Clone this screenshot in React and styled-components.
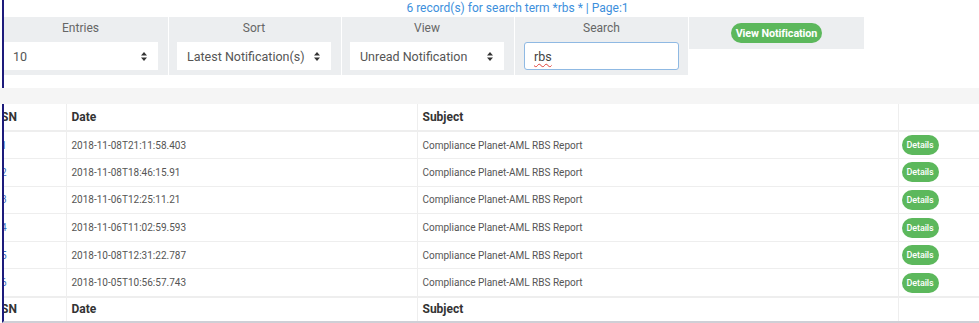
import React from "react";
import styled, { createGlobalStyle } from "styled-components";

const GlobalStyle = createGlobalStyle`
  body {
    margin: 0;
    background: #ffffff;
    font-family: Roboto, "Open Sans", "Liberation Sans", sans-serif;
    overflow: hidden;
  }
`;

const Page = styled.div`
  width: 979px;
  height: 323px;
  overflow: hidden;
  background: #fff;
`;

const Section = styled.section`
  margin-left: 2px;
  border-left: 2px solid #1d1b7c;
  overflow: hidden;
  background: #fff;
  ${(p) => p.bottomLine && "border-bottom: 2px solid #cfcfd6;"}
`;

const Title = styled.div`
  height: 17px;
  line-height: 17px;
  font-size: 12px;
  color: #3d8fdc;
  text-align: center;
  padding-left: 52px;
`;

const FilterRow = styled.div`
  display: flex;
  align-items: flex-start;
  gap: 1px;
  margin-left: -9px;
  margin-bottom: 13px;
`;

const FilterBox = styled.div`
  width: ${(p) => p.width || 172}px;
  height: ${(p) => (p.short ? 32 : 58)}px;
  box-sizing: border-box;
  background: #eceef0;
  padding: ${(p) => p.pad || "3px 10px 0 8px"};
  display: flex;
  flex-direction: column;
  align-items: stretch;
`;

const Label = styled.div`
  line-height: 16px;
  font-size: 12px;
  color: #666;
  text-align: center;
  margin-bottom: 6px;
`;

const Select = styled.div`
  height: 28px;
  background: #fff;
  display: flex;
  align-items: center;
  justify-content: space-between;
  padding: 0 11px 0 10px;
  font-size: 12.5px;
  color: #555;
`;

const SearchField = styled.div`
  height: 28px;
  box-sizing: border-box;
  background: #fff;
  border: 1px solid #8fb9e3;
  border-radius: 3px;
  display: flex;
  align-items: center;
  padding-left: 9px;
  font-size: 12.5px;
  color: #444;
`;

const SpellError = styled.span`
  text-decoration: underline wavy #e0413a;
  text-decoration-thickness: 1px;
  text-underline-offset: 2px;
`;

const GreenButton = styled.button`
  border: none;
  background: #5cb85c;
  color: #fff;
  font-family: inherit;
  font-size: ${(p) => (p.small ? 9 : 10.8)}px;
  font-weight: ${(p) => (p.small ? 500 : 700)};
  height: 20px;
  padding: 0 ${(p) => (p.small ? 5 : 5)}px;
  border-radius: 10px;
  letter-spacing: -0.1px;
  cursor: pointer;
`;

const ButtonHolder = styled.div`
  display: flex;
  justify-content: center;
  padding-top: 6px;
`;

const Strip = styled.div`
  height: 16px;
  background: #f5f5f5;
`;

const Table = styled.table`
  margin-left: -12px;
  width: 1010px;
  border-collapse: collapse;
  table-layout: fixed;
`;

const HeadCell = styled.th`
  text-align: left;
  font-size: 12px;
  font-weight: 700;
  color: #333;
  padding: 0 5px;
  border-left: 1px solid #eeeeee;
  &:first-child {
    border-left: none;
    padding-left: 9px;
  }
`;

const HeadRow = styled.tr`
  height: ${(p) => (p.foot ? 24 : 27)}px;
  border-${(p) => (p.foot ? "top" : "bottom")}: 2px solid #eeeeee;
`;

const BodyRow = styled.tr`
  height: 27.6px;
  border-bottom: 1px solid #eeeeee;
`;

const Cell = styled.td`
  font-size: 10px;
  color: #555;
  padding: 0 5px;
  border-left: 1px solid #eeeeee;
  &:first-child {
    border-left: none;
  }
`;

const SnCell = styled(Cell)`
  color: #3d6fc4;
  padding-left: 9px;
`;

const ActionCell = styled(Cell)`
  padding-left: 3px;
`;

function Arrows() {
  return (
    <svg width="6" height="9" viewBox="0 0 6 9">
      <path d="M3 0 L6 3.5 L0 3.5 Z M3 9 L6 5.5 L0 5.5 Z" fill="#333" />
    </svg>
  );
}

const rows = [
  "2018-11-08T21:11:58.403",
  "2018-11-08T18:46:15.91",
  "2018-11-06T12:25:11.21",
  "2018-11-06T11:02:59.593",
  "2018-10-08T12:31:22.787",
  "2018-10-05T10:56:57.743",
];

function HeaderCells() {
  return (
    <>
      <HeadCell>SN</HeadCell>
      <HeadCell>Date</HeadCell>
      <HeadCell>Subject</HeadCell>
      <HeadCell />
    </>
  );
}

export default function App() {
  return (
    <Page>
      <GlobalStyle />
      <Section>
        <Title>6 record(s) for search term *rbs * | Page:1</Title>
        <FilterRow>
          <FilterBox width={173}>
            <Label>Entries</Label>
            <Select>
              <span>10</span>
              <Arrows />
            </Select>
          </FilterBox>
          <FilterBox>
            <Label>Sort</Label>
            <Select>
              <span>Latest Notification(s)</span>
              <Arrows />
            </Select>
          </FilterBox>
          <FilterBox>
            <Label>View</Label>
            <Select>
              <span>Unread Notification</span>
              <Arrows />
            </Select>
          </FilterBox>
          <FilterBox width={173} pad="3px 9px 0 9px">
            <Label>Search</Label>
            <SearchField>
              <SpellError>rbs</SpellError>
            </SearchField>
          </FilterBox>
          <FilterBox short width={175} pad="0">
            <ButtonHolder>
              <GreenButton>View Notification</GreenButton>
            </ButtonHolder>
          </FilterBox>
        </FilterRow>
      </Section>
      <Strip />
      <Section bottomLine>
        <Table>
          <colgroup>
            <col style={{ width: 74 }} />
            <col style={{ width: 351 }} />
            <col style={{ width: 481 }} />
            <col style={{ width: 104 }} />
          </colgroup>
          <thead>
            <HeadRow>
              <HeaderCells />
            </HeadRow>
          </thead>
          <tbody>
            {rows.map((date, i) => (
              <BodyRow key={date}>
                <SnCell>{i + 1}</SnCell>
                <Cell>{date}</Cell>
                <Cell>Compliance Planet-AML RBS Report</Cell>
                <ActionCell>
                  <GreenButton small>Details</GreenButton>
                </ActionCell>
              </BodyRow>
            ))}
          </tbody>
          <tfoot>
            <HeadRow foot>
              <HeaderCells />
            </HeadRow>
          </tfoot>
        </Table>
      </Section>
    </Page>
  );
}
